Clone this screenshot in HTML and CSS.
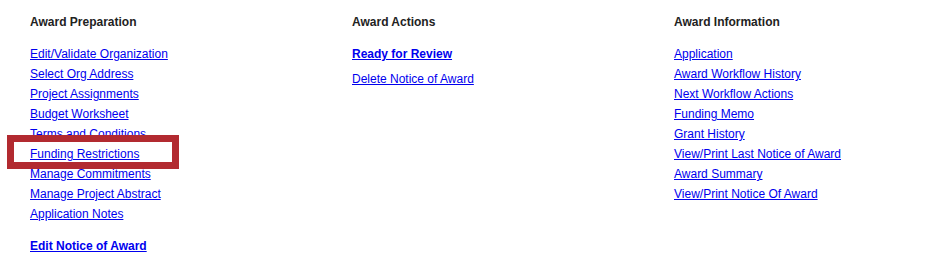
FILE: index.html
```html
<!DOCTYPE html>
<html>
<head>
<meta charset="utf-8">
<link rel="stylesheet" href="styles.css">
</head>
<body>
<div class="page">
  <div class="col">
    <h3 class="heading">Award Preparation</h3>
    <ul class="links">
      <li><a href="#">Edit/Validate Organization</a></li>
      <li><a href="#">Select Org Address</a></li>
      <li><a href="#">Project Assignments</a></li>
      <li><a href="#">Budget Worksheet</a></li>
      <li><a href="#">Terms and Conditions</a></li>
      <li><a href="#">Funding Restrictions</a></li>
      <li><a href="#">Manage Commitments</a></li>
      <li><a href="#">Manage Project Abstract</a></li>
      <li><a href="#">Application Notes</a></li>
    </ul>
    <a class="bold-link edit-noa" href="#">Edit Notice of Award</a>
    <div class="highlight"></div>
  </div>
  <div class="col">
    <h3 class="heading">Award Actions</h3>
    <ul class="links actions">
      <li class="ready"><a class="bold-link" href="#">Ready for Review</a></li>
      <li><a href="#">Delete Notice of Award</a></li>
    </ul>
  </div>
  <div class="col">
    <h3 class="heading">Award Information</h3>
    <ul class="links">
      <li><a href="#">Application</a></li>
      <li><a href="#">Award Workflow History</a></li>
      <li><a href="#">Next Workflow Actions</a></li>
      <li><a href="#">Funding Memo</a></li>
      <li><a href="#">Grant History</a></li>
      <li><a href="#">View/Print Last Notice of Award</a></li>
      <li><a href="#">Award Summary</a></li>
      <li><a href="#">View/Print Notice Of Award</a></li>
    </ul>
  </div>
</div>
</body>
</html>
```

FILE: styles.css
```css
html, body {
  margin: 0;
  padding: 0;
  background: #ffffff;
}
body {
  font-family: "Liberation Sans", Arial, sans-serif;
  font-size: 12px;
  color: #222222;
}
.page {
  position: relative;
  display: grid;
  grid-template-columns: 322px 322px 1fr;
  padding: 12px 0 0 30px;
}
.col {
  display: flex;
  flex-direction: column;
  align-items: flex-start;
}
.heading {
  margin: 0 0 12px 0;
  font-size: 12px;
  line-height: 20px;
  font-weight: bold;
  color: #222222;
}
.links {
  list-style: none;
  margin: 0;
  padding: 0;
}
.links li {
  line-height: 20px;
}
a {
  color: #0000ee;
  text-decoration: underline;
}
.bold-link {
  font-weight: bold;
}
.actions .ready {
  margin-bottom: 5px;
}
.edit-noa {
  margin-top: 12px;
  line-height: 20px;
}
.highlight {
  position: absolute;
  left: 7px;
  top: 135px;
  width: 158px;
  height: 20px;
  border: 7px solid #b22a30;
  pointer-events: none;
}
```
